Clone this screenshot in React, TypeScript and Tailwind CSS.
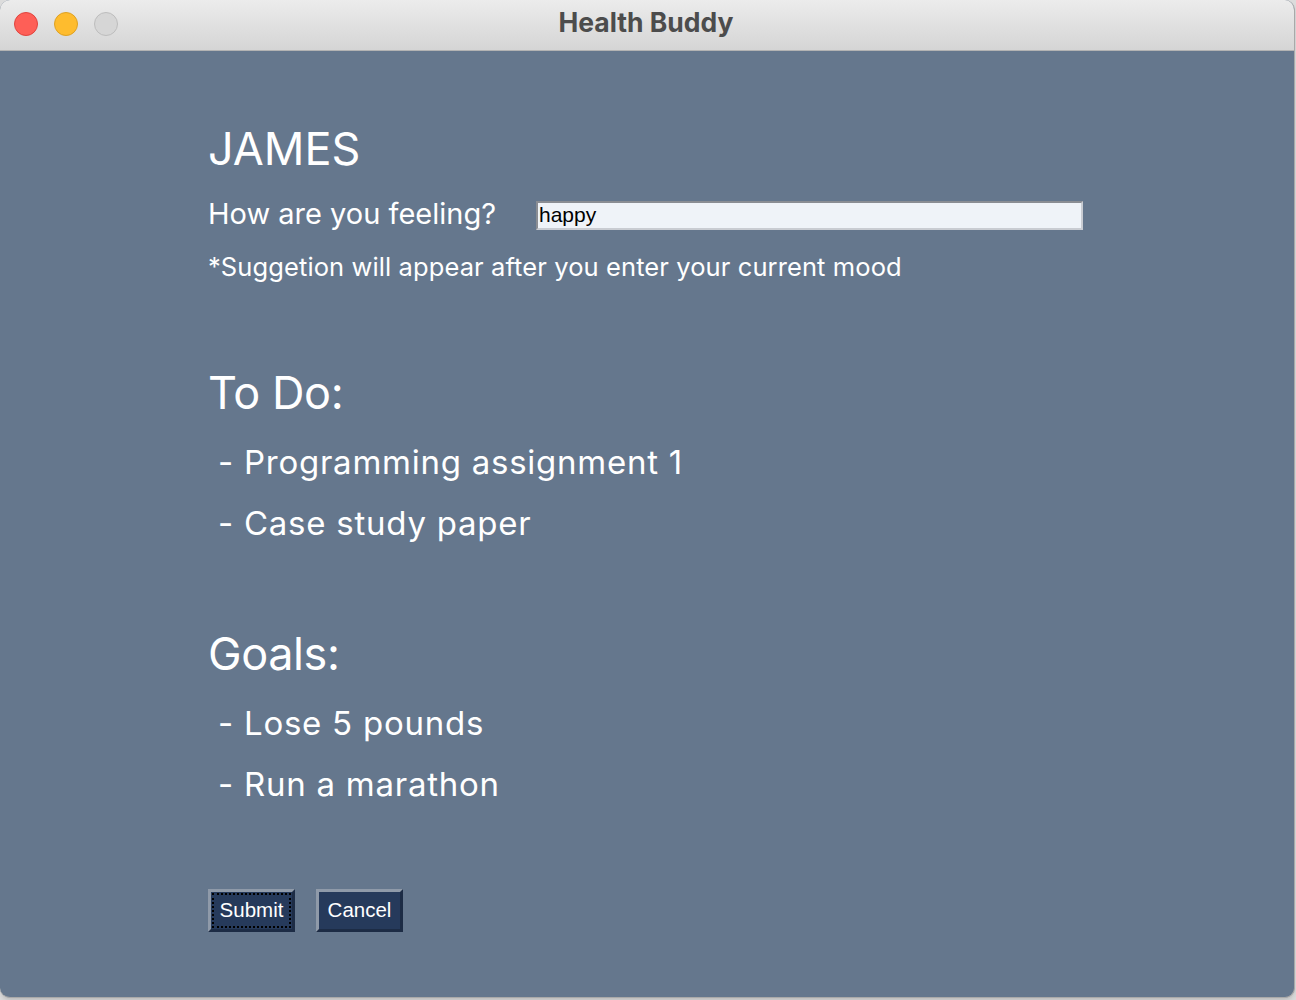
import React from "react";

const todos = ["Programming assignment 1", "Case study paper"];
const goals = ["Lose 5 pounds", "Run a marathon"];

const TitleBar: React.FC = () => (
  <div className="relative flex h-[51px] items-center border-b border-[#b3b3b3] bg-gradient-to-b from-[#ececec] to-[#d5d5d5]">
    <div className="ml-[14px] mt-[-3px] flex gap-[16px]">
      <span className="h-[24px] w-[24px] rounded-full border border-[#e0443e] bg-[#fe5f57]" />
      <span className="h-[24px] w-[24px] rounded-full border border-[#dea123] bg-[#febc2e]" />
      <span className="h-[24px] w-[24px] rounded-full border border-[#bdbdbd] bg-[#d6d6d6]" />
    </div>
    <div className="absolute inset-x-0 top-0 flex h-[46px] items-center justify-center pointer-events-none">
      <span className="ml-[-2px] text-[26.5px] font-bold text-[#4c4c4c]">Health Buddy</span>
    </div>
  </div>
);

const Section: React.FC<{ title: string; items: string[] }> = ({ title, items }) => (
  <div className="flex flex-col">
    <h2 className="text-[45px] leading-[56px] font-normal tracking-[-0.4px]">{title}</h2>
    {items.map((item, i) => (
      <p key={i} className="ml-[10px] mt-[21px] text-[33px] leading-[40px] tracking-[0.75px]">
        - {item}
      </p>
    ))}
  </div>
);

const App: React.FC = () => {
  return (
    <div className="h-[1000px] w-[1296px] bg-[#dcdcdc]">
      <div className="flex h-[998px] w-[1295px] flex-col overflow-hidden rounded-[10px] border-r border-b border-[#a9a9a9] bg-[#65778d] font-['Inter',sans-serif] shadow-md">
        <TitleBar />

        <div className="flex flex-col pl-[208px] pt-[70px] text-white">
          <h1 className="text-[45px] leading-[56px] font-normal">JAMES</h1>

          {/* Mood input */}
          <div className="mt-[19px] flex h-[36px] items-center">
            <label className="w-[328px] text-[29px] leading-[36px]">How are you feeling?</label>
            <input
              defaultValue="happy"
              className="mt-[2px] h-[29px] w-[547px] border-2 border-t-[#8a8d93] border-l-[#8a8d93] border-b-[#c9ccd2] border-r-[#c9ccd2] bg-[#eff3f8] px-[1px] font-['Liberation_Sans',sans-serif] text-[21px] text-black outline-none"
            />
          </div>

          <p className="mt-[19px] text-[25.5px] leading-[32px] tracking-[0.1px]">
            *Suggetion will appear after you enter your current mood
          </p>

          <div className="mt-[82px]">
            <Section title="To Do:" items={todos} />
          </div>

          <div className="mt-[83px]">
            <Section title="Goals:" items={goals} />
          </div>

          {/* Buttons */}
          <div className="mt-[85px] flex gap-[21px] font-['Liberation_Sans',sans-serif]">
            <button className="h-[43px] w-[87px] border-[3px] border-t-[#8f9aa9] border-l-[#8f9aa9] border-b-[#1d2c45] border-r-[#1d2c45] bg-[#263a5b] p-[1px]">
              <span className="flex h-full w-full items-center justify-center border-2 border-dotted border-black text-[20.5px] text-white">
                Submit
              </span>
            </button>
            <button className="flex h-[43px] w-[87px] items-center justify-center border-[3px] border-t-[#8f9aa9] border-l-[#8f9aa9] border-b-[#1d2c45] border-r-[#1d2c45] bg-[#263a5b] text-[20.5px] text-white">
              Cancel
            </button>
          </div>
        </div>
      </div>
    </div>
  );
};

export default App;
